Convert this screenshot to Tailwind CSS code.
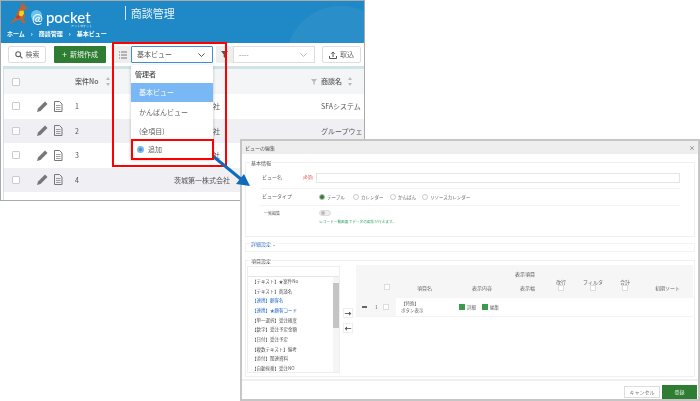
<!DOCTYPE html>
<html lang="ja">
<head>
  <meta charset="UTF-8" />
  <meta name="viewport" content="width=device-width, initial-scale=1" />
  <title>商談管理</title>
  <script src="https://cdn.jsdelivr.net/npm/@tailwindcss/browser@4"></script>
</head>
<body class="bg-white">
  <div class="relative w-[700px] h-[401px] overflow-hidden bg-white text-[#555] blur-[0.35px] font-['Noto_Sans_CJK_JP','Noto_Sans',sans-serif]">

    <!-- 商談管理 window -->
    <div class="absolute left-0 top-0 w-[365px] h-[201px] border border-[#aaa] bg-white flex flex-col overflow-hidden">
      <!-- Header -->
      <div class="relative h-[42px] shrink-0 bg-[#1f88c6] overflow-hidden">
        <div class="absolute left-[285px] top-[5px] w-[110px] h-[110px] rounded-full bg-white/5"></div>
        <div class="absolute left-[30px] top-[9px] w-[11px] h-[11px] rounded-full bg-[#6cc3ee]"></div>
        <div class="relative flex items-start">
          <svg class="ml-[6px] mt-[0px] shrink-0" width="26" height="25" viewBox="0 0 26 25">
            <path d="M14 1l2 3 1-3 1 4 3 2-1 1.500-3 .5 0 3 1 3-1 4 2 3-4 0-1-3-3 0-9 4 6-6 2-5 2-4 2-3z" fill="#b5673a" />
            <path d="M12.500 10l4-.5 .5 3-2 3-3-1z" fill="#f2d21f" />
            <circle cx="11" cy="16" r="1.800" fill="#c9342c" />
          </svg>
          <div class="relative ml-[-1px] mt-[9px] flex items-baseline gap-[3px] text-white font-['Lato'] leading-[14px]">
            <span class="text-[13px]">@</span>
            <span class="text-[15px] font-medium">pocket</span>
            <span class="absolute left-[39px] top-[14px] text-[3px] leading-[4px] whitespace-nowrap">アットポケット</span>
          </div>
          <div class="ml-[34px] mt-[5px] h-[14px] pl-[5px] border-l border-white/80 flex items-center text-[11px] text-white/90">商談管理</div>
        </div>
        <div class="absolute left-[6px] top-[29px] flex items-center gap-[6px] text-[6px] leading-[8px] font-bold text-white">
          <span>ホーム</span><span>›</span><span>商談管理</span><span>›</span><span>基本ビュー</span>
        </div>
      </div>

      <!-- Toolbar -->
      <div class="h-[17px] mt-[3px] shrink-0 flex items-stretch pl-[7px] text-[7px]">
        <div class="w-[38px] border border-[#ddd] rounded-[2px] flex items-center justify-center gap-[3px] text-[#666]">
          <svg width="8" height="8" viewBox="0 0 10 10" fill="none" stroke="#666" stroke-width="1.4"><circle cx="4" cy="4" r="3" /><path d="M6.2 6.2L9.3 9.3" /></svg>
          <span>検索</span>
        </div>
        <div class="ml-[8px] w-[52px] bg-[#2e7d32] rounded-[1px] flex items-center justify-center gap-[3px] text-white/90">
          <span class="text-[9px] leading-none">+</span>
          <span>新規作成</span>
        </div>
        <div class="ml-[8px] w-[17px] bg-[#eee] flex items-center justify-center">
          <svg width="8" height="8" viewBox="0 0 8 8" stroke="#777" stroke-width="1"><path d="M0 1h1M2 1h6M0 4h1M2 4h6M0 7h1M2 7h6" /></svg>
        </div>
        <div class="w-[82px] border border-[#3f8fd0] rounded-[1px] flex items-center justify-between pl-[5px] pr-[7px] text-[#555]">
          <span>基本ビュー</span>
          <svg width="7" height="4" viewBox="0 0 7 4" fill="none" stroke="#555" stroke-width="1"><path d="M.5.5l3 3 3-3" /></svg>
        </div>
        <div class="ml-[3px] w-[17px] bg-[#eee] flex items-center justify-center">
          <svg width="7" height="7" viewBox="0 0 7 7" fill="#555"><path d="M0 0h7L4.3 3.4V7L2.7 6V3.4z" /></svg>
        </div>
        <div class="w-[82px] border border-[#ddd] flex items-center justify-between pl-[5px] pr-[7px] text-[#888]">
          <span>----</span>
          <svg width="7" height="4" viewBox="0 0 7 4" fill="none" stroke="#bbb" stroke-width="1"><path d="M.5.5l3 3 3-3" /></svg>
        </div>
        <div class="ml-[7px] w-[39px] border border-[#ddd] rounded-[2px] flex items-center justify-center gap-[3px] text-[#666]">
          <svg width="8" height="8" viewBox="0 0 8 8" fill="none" stroke="#555" stroke-width="1"><path d="M4 6V1M2.3 2.7L4 1l1.700 1.700M.5 5v2.500h7V5" /></svg>
          <span>取込</span>
        </div>
      </div>

      <!-- Table -->
      <div class="mt-[3px] ml-[2px] flex-1 border-t-[3px] border-l border-[#cfe3ea] text-[7px]">
        <div class="h-[25px] bg-[#f4f5f7] flex items-center font-medium text-[#555]">
          <span class="ml-[8px] w-[8px] h-[8px] border border-[#ccc] rounded-[1px] bg-white"></span>
          <span class="ml-[55px] w-[31px]">案件No</span>
          <svg width="4" height="9" viewBox="0 0 4 9" fill="#bbb"><path d="M2 0l2 3H0zM2 9L0 6h4z" /></svg>
          <svg class="ml-[201px]" width="6" height="6" viewBox="0 0 7 7" fill="#bbb"><path d="M0 0h7L4.3 3.400V7L2.700 6V3.400z" /></svg>
          <span class="ml-[4px] w-[27px]">商談名</span>
          <svg width="4" height="9" viewBox="0 0 4 9" fill="#bbb"><path d="M2 0l2 3H0zM2 9L0 6h4z" /></svg>
        </div>

        <div class="h-[24.5px] bg-white flex items-center">
          <span class="ml-[8px] w-[8px] h-[8px] border border-[#ccc] rounded-[1px] bg-white"></span>
          <svg class="ml-[17px]" width="26" height="11" viewBox="0 0 26 11"><path d="M0 11l1-3.500 7-7 2.500 2.500-7 7z" fill="#777" /><path d="M17.500.5h5l2.500 2.500v7.500h-7.500z" fill="none" stroke="#777" /><path d="M19 4.500h4.500M19 6.500h4.500M19 8.500h4.500" stroke="#777" stroke-width=".7" /></svg>
          <span class="ml-[12px] w-[99px]">1</span>
          <span class="pl-[39px] w-[147px]">社</span>
          <span class="whitespace-nowrap">SFAシステム</span>
        </div>
        <div class="h-[24.5px] bg-[#f0f0f4] flex items-center">
          <span class="ml-[8px] w-[8px] h-[8px] border border-[#ccc] rounded-[1px] bg-white"></span>
          <svg class="ml-[17px]" width="26" height="11" viewBox="0 0 26 11"><path d="M0 11l1-3.500 7-7 2.500 2.500-7 7z" fill="#777" /><path d="M17.500.5h5l2.500 2.500v7.500h-7.500z" fill="none" stroke="#777" /><path d="M19 4.500h4.500M19 6.500h4.500M19 8.500h4.500" stroke="#777" stroke-width=".7" /></svg>
          <span class="ml-[12px] w-[99px]">2</span>
          <span class="pl-[39px] w-[147px]">社</span>
          <span class="whitespace-nowrap">グループウェ</span>
        </div>
        <div class="h-[24.5px] bg-white flex items-center">
          <span class="ml-[8px] w-[8px] h-[8px] border border-[#ccc] rounded-[1px] bg-white"></span>
          <svg class="ml-[17px]" width="26" height="11" viewBox="0 0 26 11"><path d="M0 11l1-3.500 7-7 2.500 2.500-7 7z" fill="#777" /><path d="M17.500.5h5l2.500 2.500v7.500h-7.500z" fill="none" stroke="#777" /><path d="M19 4.500h4.500M19 6.500h4.500M19 8.500h4.500" stroke="#777" stroke-width=".7" /></svg>
          <span class="ml-[12px] w-[99px]">3</span>
          <span class="pl-[39px] w-[147px]">社</span>
        </div>
        <div class="h-[24.5px] bg-[#f0f0f4] flex items-center">
          <span class="ml-[8px] w-[8px] h-[8px] border border-[#ccc] rounded-[1px] bg-white"></span>
          <svg class="ml-[17px]" width="26" height="11" viewBox="0 0 26 11"><path d="M0 11l1-3.500 7-7 2.500 2.500-7 7z" fill="#777" /><path d="M17.500.5h5l2.500 2.500v7.500h-7.500z" fill="none" stroke="#777" /><path d="M19 4.500h4.500M19 6.500h4.500M19 8.500h4.500" stroke="#777" stroke-width=".7" /></svg>
          <span class="ml-[12px] w-[99px]">4</span>
          <span class="whitespace-nowrap">茨城第一株式会社</span>
        </div>
      </div>
    </div>

    <!-- View dropdown -->
    <div class="absolute left-[131px] top-[65px] w-[82px] h-[94px] bg-white shadow-[0_1px_3px_rgba(0,0,0,0.25)] text-[7px] flex flex-col">
      <div class="h-[18px] flex items-center pl-[4px] font-medium text-[#444]">管理者</div>
      <div class="h-[19px] flex items-center pl-[8px] bg-[#7ab8f5] text-white">基本ビュー</div>
      <div class="h-[20px] flex items-center pl-[8px] text-[#666]">かんばんビュー</div>
      <div class="h-[18px] flex items-center pl-[8px] text-[#666]">(全項目)</div>
      <div class="h-[19px] flex items-center pl-[6px] gap-[4px] text-[#666]">
        <span class="w-[7px] h-[7px] rounded-full bg-[#3f8fd0] border-2 border-[#7fb8e6]"></span>
        <span>追加</span>
      </div>
    </div>

    <!-- Red highlights -->
    <div class="absolute left-[112px] top-[42px] w-[115px] h-[125px] border-2 border-[#f00]"></div>
    <div class="absolute left-[131px] top-[139px] w-[83px] h-[21px] border-2 border-[#f00]"></div>

    <!-- ビューの編集 modal -->
    <div class="absolute left-[240px] top-[139px] w-[460px] h-[262px] bg-white border-2 border-[#c6c6c6] flex flex-col text-[5px] text-[#666]">
      <div class="h-[13px] shrink-0 bg-[#eee] flex items-center justify-between pl-[3px] pr-[3px] text-[#555]">
        <span>ビューの編集</span>
        <span class="text-[6px] leading-none">×</span>
      </div>

      <!-- 基本情報 -->
      <div class="relative mt-[8px] mx-[3px] h-[75px] shrink-0 border border-[#f0f0f0] px-[16px]">
        <span class="absolute left-[4px] top-[-4px] bg-white px-[1px] leading-[8px] text-[#555]">基本情報</span>
        <div class="h-[26px] mx-[-2px] border-b border-[#f3f3f3] flex items-start">
          <span class="w-[43px] pl-[2px] mt-[10px]">ビュー名</span>
          <span class="w-[14px] mt-[11px] text-[#d9534f] text-[4px]">(必須)</span>
          <span class="w-[368px] h-[10px] mt-[10px] border border-[#e5e5e5]"></span>
        </div>
        <div class="h-[17px] mx-[-2px] border-b border-[#f3f3f3] flex items-center">
          <span class="w-[59px] pl-[2px] mb-[3px]">ビュータイプ</span>
          <span class="w-[6px] h-[6px] rounded-full border border-[#bbb] bg-[#2e7d32]"></span>
          <span class="ml-[2px] w-[26px] text-[4.5px]">テーブル</span>
          <span class="w-[6px] h-[6px] rounded-full border border-[#ccc]"></span>
          <span class="ml-[2px] w-[29px] text-[4.5px]">カレンダー</span>
          <span class="w-[6px] h-[6px] rounded-full border border-[#ccc]"></span>
          <span class="ml-[2px] w-[24px] text-[4.5px]">かんばん</span>
          <span class="w-[6px] h-[6px] rounded-full border border-[#ccc]"></span>
          <span class="ml-[2px] text-[4.5px]">リソースカレンダー</span>
        </div>
        <div class="flex mt-[4px]">
          <span class="w-[57px] pl-[2px] text-[4px]">一覧編集</span>
          <div>
            <div class="w-[12px] h-[6px] rounded-full border border-[#ddd] bg-[#eee] flex items-center">
              <span class="w-[4px] h-[4px] rounded-full bg-[#bbb] ml-[1px]"></span>
            </div>
            <div class="mt-[3px] text-[3.7px] leading-[5px] text-[#3aa76d]">レコード一覧画面でデータの編集が行えます。</div>
          </div>
        </div>
      </div>

      <!-- 詳細設定 -->
      <div class="relative mt-[6px] mx-[3px] h-[9px] shrink-0 border border-[#f3f3f3]">
        <span class="absolute left-[4px] top-[-4px] bg-white px-[1px] leading-[8px] text-[#3f78c0]">詳細設定 ⌄</span>
      </div>

      <!-- 項目設定 -->
      <div class="relative mt-[8px] mx-[3px] h-[117px] shrink-0 border border-[#f0f0f0] flex pt-[5px] pl-[1px]">
        <span class="absolute left-[4px] top-[-4px] bg-white px-[1px] leading-[8px] text-[#555]">項目設定</span>
        <div class="w-[93px] h-[107px] shrink-0 border border-[#eee] flex flex-col">
          <div class="h-[10px] shrink-0 border-b border-[#e5e5e5]"></div>
          <div class="flex-1 flex min-h-0">
            <div class="flex-1 pl-[4px] leading-[9.67px] text-[#555] text-[4.5px] whitespace-nowrap overflow-hidden">
              <div>【テキスト】★案件No</div>
              <div>【テキスト】商談名</div>
              <div class="text-[#2f6fd0]">【連携】顧客名</div>
              <div class="text-[#2f6fd0]">【連携】★顧客コード</div>
              <div>【単一選択】受注確度</div>
              <div>【数字】受注予定金額</div>
              <div>【日付】受注予定</div>
              <div>【複数テキスト】備考</div>
              <div>【添付】関連資料</div>
              <div>【自動採番】受注NO</div>
            </div>
            <div class="w-[6px] shrink-0 bg-[#f5f5f5] flex flex-col">
              <div class="mt-[6px] h-[45px] bg-[#c4c4c4]"></div>
            </div>
          </div>
        </div>
        <div class="w-[15px] shrink-0 pl-[3px] pt-[42px] flex flex-col gap-[5px]">
          <span class="w-[10px] h-[10px] border border-[#eee] flex items-center justify-center text-[7px] font-bold leading-none text-[#444]">→</span>
          <span class="w-[10px] h-[10px] border border-[#eee] flex items-center justify-center text-[7px] font-bold leading-none text-[#444]">←</span>
        </div>
        <div class="w-[337px] shrink-0 ml-[1px] -mt-[1px]">
          <div class="h-[33px] bg-[#f6f6f6] relative flex items-end pb-[7px]">
            <span class="absolute left-[159px] top-[5px] text-[#555]">表示項目</span>
            <span class="ml-[28px] mb-[1px] w-[6px] h-[6px] border border-[#ddd] bg-white"></span>
            <span class="ml-[27px] w-[55px]">項目名</span>
            <span class="w-[48px]">表示内容</span>
            <span class="w-[25px]">表示幅</span>
            <div class="w-[32px] flex flex-col items-center"><span class="leading-[7px]">改行</span><span class="w-[6px] h-[6px] border border-[#ddd] bg-white"></span></div>
            <div class="w-[32px] flex flex-col items-center"><span class="leading-[7px]">フィルタ</span><span class="w-[6px] h-[6px] border border-[#ddd] bg-white"></span></div>
            <div class="w-[32px] flex flex-col items-center"><span class="leading-[7px]">合計</span><span class="w-[6px] h-[6px] border border-[#ddd] bg-white"></span></div>
            <span class="ml-[14px]">初期ソート</span>
          </div>
          <div class="h-[19px] flex items-center border-b border-[#f3f3f3]">
            <div class="w-[40px] h-full bg-[#f6f6f6] flex items-center pl-[6px]">
              <span class="w-[5px] h-[2px] border-y border-[#666]"></span>
              <span class="ml-[8px] w-[8px]">1</span>
              <span class="w-[6px] h-[6px] border border-[#ddd] bg-white"></span>
            </div>
            <div class="ml-[5px] w-[58px] leading-[7px] text-[4.5px]">
              <div>【特殊】</div>
              <div>ボタン表示</div>
            </div>
            <span class="w-[6px] h-[6px] bg-[#3c9a4d]"></span>
            <span class="ml-[2px] w-[15px] text-[4.5px]">詳細</span>
            <span class="w-[6px] h-[6px] bg-[#3c9a4d]"></span>
            <span class="ml-[2px] text-[4.5px]">編集</span>
          </div>
        </div>
      </div>

      <!-- Footer -->
      <div class="mt-[2px] flex-1 border-t-2 border-[#f0f0f0] flex items-end justify-end gap-[2px] pr-[1px]">
        <span class="mb-[1px] w-[36px] h-[12px] border border-[#ddd] flex items-center justify-center text-[#777]">キャンセル</span>
        <span class="w-[35px] h-[14px] bg-[#2e7d32] flex items-center justify-center text-white/90">登録</span>
      </div>
    </div>

    <!-- Arrow from 追加 to the modal -->
    <svg class="absolute left-[210px] top-[155px]" width="45" height="35" viewBox="0 0 45 35">
      <path d="M4 2L32 25" stroke="#0f6cbd" stroke-width="3" />
      <path d="M40 31L26 29L34 19z" fill="#0f6cbd" />
    </svg>
  </div>
</body>
</html>
